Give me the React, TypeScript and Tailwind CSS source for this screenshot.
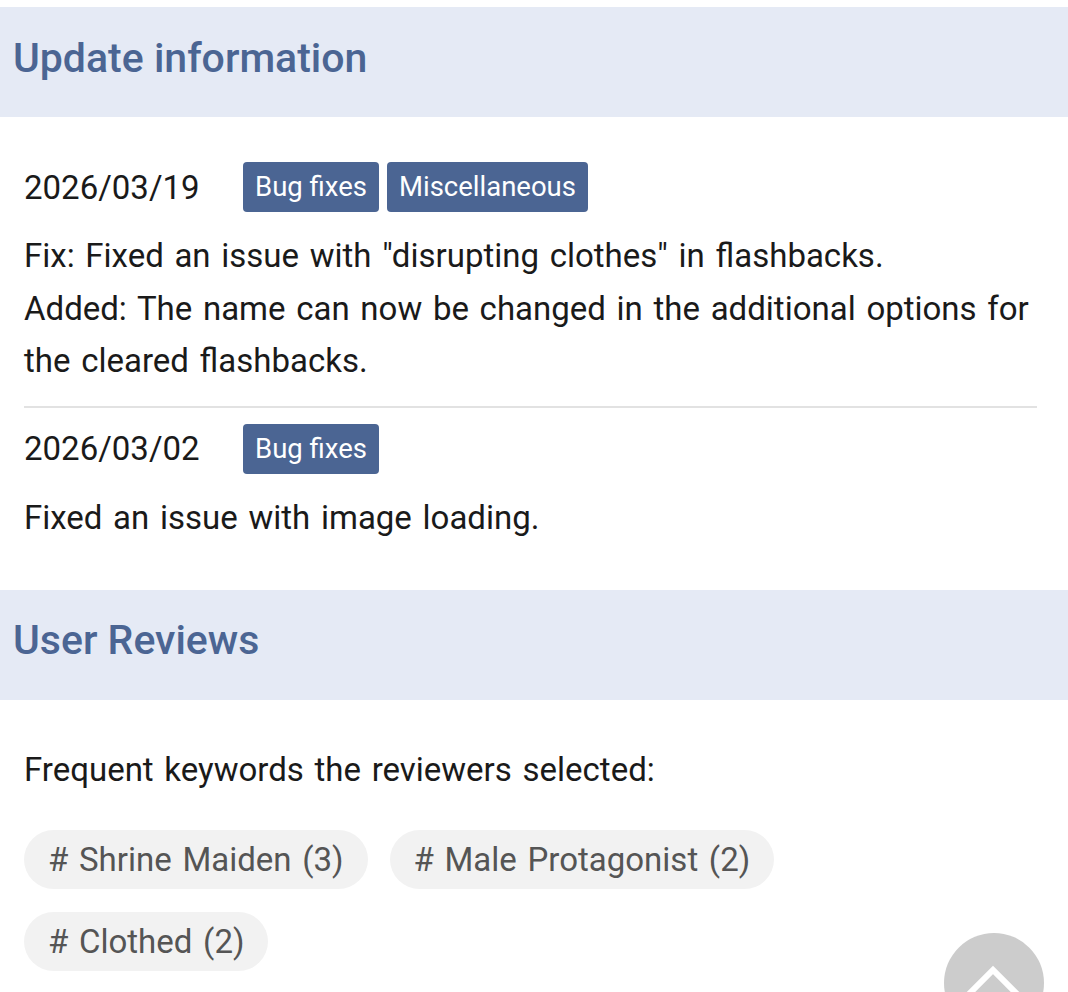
import React from "react";

const Badge = ({ children }: { children: React.ReactNode }) => (
  <span className="inline-flex h-[50px] items-center rounded-[4px] bg-[#4b6593] px-[12px] text-[27.5px] leading-none text-white">
    {children}
  </span>
);

const Chip = ({ children }: { children: React.ReactNode }) => (
  <span className="inline-flex h-[59px] items-center rounded-full bg-[#f2f2f2] px-[24px] text-[33px] leading-none text-[#555555] [word-spacing:2.5px]">
    {children}
  </span>
);

export default function App() {
  return (
    <div
      className="relative h-[992px] w-[1068px] overflow-hidden bg-white text-[#1a1a1a]"
      style={{ fontFamily: "Roboto, 'Noto Sans', sans-serif" }}
    >
      <div className="h-[7px]" />
      <div className="flex h-[110px] items-center bg-[#e5eaf5] pb-[8px] pl-[13px]">
        <h2 className="text-[41px] font-medium leading-none text-[#4b6593]">Update information</h2>
      </div>

      <div className="pl-[24px] pr-[31px] [word-spacing:2.5px]">
        <div className="mt-[45px] flex items-center">
          <span className="w-[219px] text-[33px] leading-none">2026/03/19</span>
          <div className="flex gap-[8px] [word-spacing:0px]">
            <Badge>Bug fixes</Badge>
            <Badge>Miscellaneous</Badge>
          </div>
        </div>
        <div className="mt-[18px] text-[33px] leading-[52.5px]">
          <p>Fix: Fixed an issue with "disrupting clothes" in flashbacks.</p>
          <p>Added: The name can now be changed in the additional options for the cleared flashbacks.</p>
        </div>
        <div className="mt-[18px] h-[2px] bg-[#e2e2e2]" />
        <div className="mt-[16px] flex items-center">
          <span className="w-[219px] text-[33px] leading-none">2026/03/02</span>
          <span className="[word-spacing:0px]">
            <Badge>Bug fixes</Badge>
          </span>
        </div>
        <p className="mt-[18px] text-[33px] leading-[52px]">Fixed an issue with image loading.</p>
      </div>

      <div className="mt-[46px] flex h-[110px] items-center bg-[#e5eaf5] pb-[8px] pl-[13px]">
        <h2 className="text-[41px] font-medium leading-none text-[#4b6593]">User Reviews</h2>
      </div>

      <div className="pl-[24px] pr-[31px]">
        <p className="mt-[44px] text-[33px] leading-[52px] [word-spacing:2.5px]">Frequent keywords the reviewers selected:</p>
        <div className="mt-[34px] flex flex-wrap gap-x-[22px] gap-y-[23px]">
          <Chip># Shrine Maiden (3)</Chip>
          <Chip># Male Protagonist (2)</Chip>
          <Chip># Clothed (2)</Chip>
        </div>
      </div>

      <div className="absolute left-[944px] top-[933px] flex h-[100px] w-[100px] items-start justify-center rounded-full bg-[#cccccc]">
        <svg width="100" height="100" viewBox="0 0 100 100" fill="none">
          <path d="M24 62 L49 37 L74 62" stroke="white" strokeWidth="6" strokeLinecap="square" />
        </svg>
      </div>
    </div>
  );
}
